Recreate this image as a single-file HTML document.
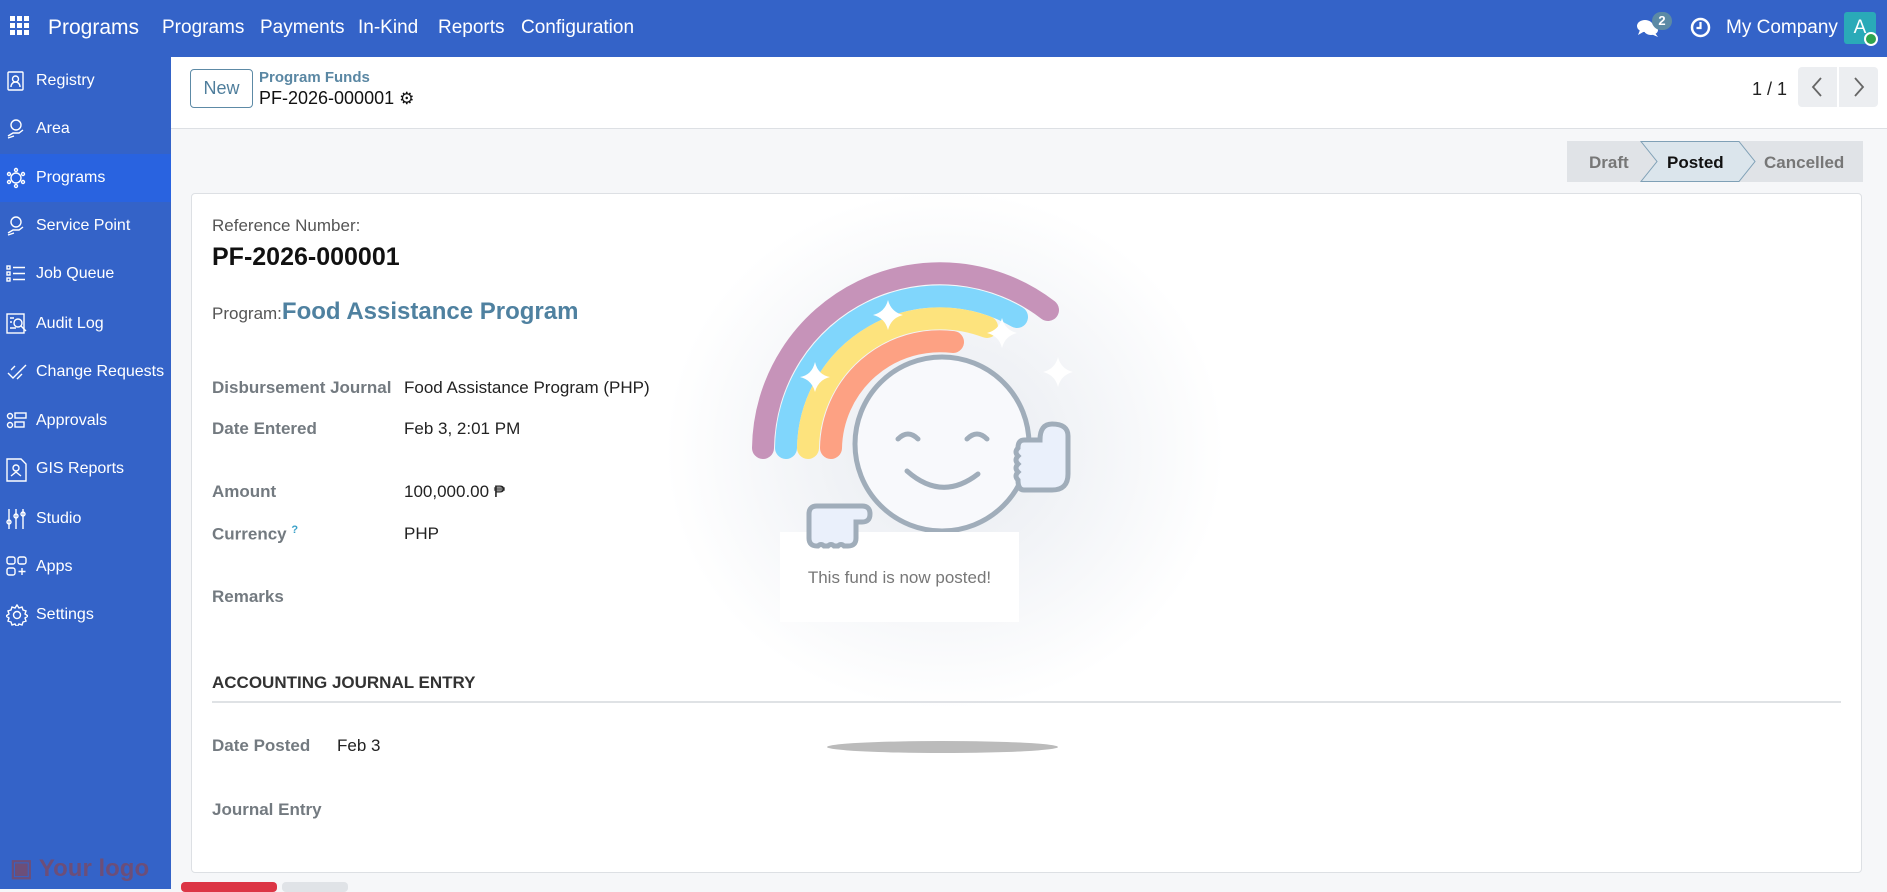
<!DOCTYPE html>
<html><head><meta charset="utf-8"><style>
*{box-sizing:border-box;margin:0;padding:0}
body{width:1887px;height:889px;overflow:hidden;font-family:"Liberation Sans",sans-serif;background:#f6f7f9;position:relative}
.top{position:absolute;left:0;top:0;width:1887px;height:57px;background:#3463c8;color:#fff}
.top span{position:absolute;top:17px;font-size:19px}
.side{position:absolute;left:0;top:57px;width:171px;height:832px;background:#3463c8;color:#fff}
.si{position:absolute;left:0;width:171px;height:48px;font-size:16px}
.si .t{position:absolute;left:36px;top:15px}
.si svg{position:absolute;left:6px;top:13px}
.cp{position:absolute;left:171px;top:57px;width:1716px;height:72px;background:#fff;border-bottom:1px solid #dde0e4}
.abs{position:absolute}
.lbl{position:absolute;left:212px;font-size:17px;font-weight:bold;color:#737a80}
.val{position:absolute;left:404px;font-size:17px;color:#222}
</style></head><body>
<div class="top">
 <svg class="abs" style="left:10px;top:16px" width="20" height="20" viewBox="0 0 20 20" fill="#fff"><rect x="0" y="0" width="5" height="5"/><rect x="7" y="0" width="5" height="5"/><rect x="14" y="0" width="5" height="5"/><rect x="0" y="7" width="5" height="5"/><rect x="7" y="7" width="5" height="5"/><rect x="14" y="7" width="5" height="5"/><rect x="0" y="14" width="5" height="5"/><rect x="7" y="14" width="5" height="5"/><rect x="14" y="14" width="5" height="5"/></svg>
 <span style="left:48px;font-size:21px;top:16px">Programs</span>
 <span style="left:162px">Programs</span><span style="left:260px">Payments</span><span style="left:358px">In-Kind</span><span style="left:438px">Reports</span><span style="left:521px">Configuration</span>
 <svg class="abs" style="left:1636px;top:18px" width="24" height="20" viewBox="0 0 24 20" fill="#fff"><ellipse cx="9" cy="8" rx="8" ry="6"/><path d="M4 12 L2 17 L9 13Z"/><ellipse cx="15" cy="12" rx="7" ry="5"/><path d="M19 15 L22 19 L15 16Z"/></svg>
 <div class="abs" style="left:1652px;top:12px;width:20px;height:18px;border-radius:9px;background:#5c8aa5;font-size:13px;font-weight:bold;text-align:center;line-height:18px">2</div>
 <svg class="abs" style="left:1690px;top:17px" width="21" height="21" viewBox="0 0 21 21"><circle cx="10.5" cy="10.5" r="8.5" fill="none" stroke="#fff" stroke-width="2.5"/><path d="M10.5 5v6h-4" fill="none" stroke="#fff" stroke-width="2.2"/></svg>
 <span style="left:1726px">My Company</span>
 <div class="abs" style="left:1844px;top:12px;width:32px;height:32px;background:#2aaab8;border-radius:3px;font-size:19px;text-align:center;line-height:32px">A</div>
 <div class="abs" style="left:1864px;top:32px;width:14px;height:14px;border-radius:7px;background:#2ea44f;border:2px solid #fff"></div>
</div>
<div class="side">
 <div class="si" style="top:0"><svg width="20" height="22" viewBox="0 0 20 22" fill="none" stroke="#fff" stroke-width="1.4"><rect x="2" y="2" width="15" height="18" rx="1"/><circle cx="9.5" cy="9" r="3"/><path d="M5 17c0-3 2-5 4.5-5s4.5 2 4.5 5"/></svg><span class="t">Registry</span></div>
 <div class="si" style="top:48px"><svg width="20" height="22" viewBox="0 0 20 22" fill="none" stroke="#fff" stroke-width="1.4"><circle cx="10" cy="7" r="5"/><path d="M2 18l5-3h6l4-3M2 20l6-2"/></svg><span class="t">Area</span></div>
 <div class="si" style="top:97px;background:#2963e0"><svg width="20" height="22" viewBox="0 0 20 22" fill="none" stroke="#fff" stroke-width="1.4"><circle cx="10" cy="11" r="5"/><circle cx="10" cy="3" r="1.5"/><circle cx="10" cy="19" r="1.5"/><circle cx="3" cy="7" r="1.5"/><circle cx="17" cy="7" r="1.5"/><circle cx="3" cy="15" r="1.5"/><circle cx="17" cy="15" r="1.5"/></svg><span class="t">Programs</span></div>
 <div class="si" style="top:145px"><svg width="20" height="22" viewBox="0 0 20 22" fill="none" stroke="#fff" stroke-width="1.4"><circle cx="10" cy="7" r="5"/><path d="M2 18l5-3h6l4-3M2 20l6-2"/></svg><span class="t">Service Point</span></div>
 <div class="si" style="top:193px"><svg width="20" height="22" viewBox="0 0 20 22" fill="none" stroke="#fff" stroke-width="1.4"><rect x="1" y="3" width="3" height="3"/><rect x="1" y="9" width="3" height="3"/><rect x="1" y="15" width="3" height="3"/><path d="M7 4.5h12M7 10.5h12M7 16.5h12"/></svg><span class="t">Job Queue</span></div>
 <div class="si" style="top:243px"><svg width="22" height="22" viewBox="0 0 22 22" fill="none" stroke="#fff" stroke-width="1.4"><rect x="1" y="1" width="17" height="19"/><circle cx="12" cy="10" r="4"/><path d="M15 13l5 5M4 5h4M4 9h2M4 15h6"/></svg><span class="t">Audit Log</span></div>
 <div class="si" style="top:291px"><svg width="22" height="22" viewBox="0 0 22 22" fill="none" stroke="#fff" stroke-width="1.4"><path d="M2 12l5 5L20 4M5 9l4-4M11 18l5-5"/></svg><span class="t">Change Requests</span></div>
 <div class="si" style="top:340px"><svg width="22" height="22" viewBox="0 0 22 22" fill="none" stroke="#fff" stroke-width="1.4"><circle cx="4" cy="6" r="2.5"/><circle cx="4" cy="15" r="2.5"/><rect x="9" y="3" width="11" height="5"/><rect x="9" y="12" width="9" height="5"/></svg><span class="t">Approvals</span></div>
 <div class="si" style="top:388px"><svg width="22" height="24" viewBox="0 0 22 24" fill="none" stroke="#fff" stroke-width="1.4"><path d="M1 1h14l5 5v17H1z"/><circle cx="10" cy="10" r="3"/><path d="M5 18l5-4 5 4"/></svg><span class="t">GIS Reports</span></div>
 <div class="si" style="top:438px"><svg width="22" height="22" viewBox="0 0 22 22" fill="none" stroke="#fff" stroke-width="1.4"><path d="M3 1v20M10 1v20M17 1v20"/><circle cx="3" cy="14" r="2"/><circle cx="10" cy="8" r="2"/><circle cx="17" cy="6" r="2"/></svg><span class="t">Studio</span></div>
 <div class="si" style="top:486px"><svg width="22" height="22" viewBox="0 0 22 22" fill="none" stroke="#fff" stroke-width="1.4"><rect x="1" y="1" width="8" height="7" rx="2"/><rect x="12" y="1" width="8" height="7" rx="2"/><rect x="1" y="12" width="8" height="7" rx="2"/><path d="M16 12v7M12.5 15.5h7"/></svg><span class="t">Apps</span></div>
 <div class="si" style="top:534px"><svg width="22" height="22" viewBox="0 0 22 22" fill="none" stroke="#fff" stroke-width="1.4"><circle cx="11" cy="11" r="3.5"/><path d="M11 1l2 3 3-1 1 3 3 1-1 3 3 2-3 2 1 3-3 1-1 3-3-1-2 3-2-3-3 1-1-3-3-1 1-3-3-2 3-2-1-3 3-1 1-3 3 1z"/></svg><span class="t">Settings</span></div>
 <div class="abs" style="left:10px;top:797px;font-size:24px;font-weight:bold;color:#7a4a66;opacity:.8">&#9635; Your logo</div>
</div>
<div class="cp">
 <div class="abs" style="left:19px;top:12px;width:63px;height:39px;border:1px solid #5d8aa6;border-radius:4px;color:#4f7e9c;font-size:18px;text-align:center;line-height:37px">New</div>
 <div class="abs" style="left:88px;top:12px;font-size:15px;font-weight:bold;color:#5a87a3">Program Funds</div>
 <div class="abs" style="left:88px;top:31px;font-size:18px;color:#111">PF-2026-000001 <span style="font-size:17px">&#9881;</span></div>
 <div class="abs" style="left:1581px;top:22px;font-size:18px;color:#222">1 / 1</div>
 <div class="abs" style="left:1627px;top:10px;width:39px;height:40px;background:#eceef1;border-radius:4px 0 0 4px"><svg width="39" height="40"><path d="M23 11 L15 20 L23 29" fill="none" stroke="#666" stroke-width="1.8"/></svg></div>
 <div class="abs" style="left:1668px;top:10px;width:39px;height:40px;background:#eceef1;border-radius:0 4px 4px 0"><svg width="39" height="40"><path d="M16 11 L24 20 L16 29" fill="none" stroke="#666" stroke-width="1.8"/></svg></div>
</div>
<svg class="abs" style="left:1567px;top:141px" width="296" height="41" viewBox="0 0 296 41"><rect width="296" height="41" fill="#e0e3e7"/><path d="M74 0.5H172L188 20.5 172 40.5H74L90 20.5Z" fill="#dbe5ec" stroke="#7fa0b6"/>
<text x="22" y="27" font-family="Liberation Sans" font-size="17" font-weight="bold" fill="#777">Draft</text>
<text x="100" y="27" font-family="Liberation Sans" font-size="17" font-weight="bold" fill="#111">Posted</text>
<text x="197" y="27" font-family="Liberation Sans" font-size="17" font-weight="bold" fill="#777">Cancelled</text></svg>
<div class="abs" style="left:191px;top:193px;width:1671px;height:680px;background:#fff;border:1px solid #dde0e4;border-radius:4px"></div>
<div class="abs" style="left:212px;top:216px;font-size:17px;color:#555">Reference Number:</div>
<div class="abs" style="left:212px;top:243px;font-size:25px;font-weight:bold;color:#111">PF-2026-000001</div>
<div class="abs" style="left:212px;top:298px;font-size:17px;color:#555">Program:<span style="font-size:24px;font-weight:bold;color:#4f81a0">Food Assistance Program</span></div>
<div class="lbl" style="top:378px">Disbursement Journal</div><div class="val" style="top:378px">Food Assistance Program (PHP)</div>
<div class="lbl" style="top:419px">Date Entered</div><div class="val" style="top:419px">Feb 3, 2:01 PM</div>
<div class="lbl" style="top:482px">Amount</div><div class="val" style="top:482px">100,000.00 &#8369;</div>
<div class="lbl" style="top:524px">Currency <sup style="color:#3aa0c8;font-size:11px">?</sup></div><div class="val" style="top:524px">PHP</div>
<div class="lbl" style="top:587px">Remarks</div>
<div class="abs" style="left:212px;top:673px;font-size:17px;font-weight:bold;color:#333">ACCOUNTING JOURNAL ENTRY</div>
<div class="abs" style="left:212px;top:701px;width:1629px;height:2px;background:#dfe2e5"></div>
<div class="lbl" style="top:736px">Date Posted</div><div class="val" style="left:337px;top:736px">Feb 3</div>
<div class="lbl" style="top:800px">Journal Entry</div>
<div class="abs" style="left:827px;top:741px;width:231px;height:12px;border-radius:50%;background:#bbb"></div>
<div class="abs" style="left:181px;top:882px;width:96px;height:10px;background:#dc3545;border-radius:4px"></div>
<div class="abs" style="left:282px;top:882px;width:66px;height:10px;background:#e0e3e7;border-radius:4px"></div>
<div class="abs" style="left:665px;top:190px;width:560px;height:520px;border-radius:50%;background:radial-gradient(closest-side,rgba(225,229,236,.8),rgba(235,238,243,.5) 60%,rgba(246,247,249,0))"></div>
<svg class="abs" style="left:0;top:0" width="1887" height="889" viewBox="0 0 1887 889">
 <g fill="none" stroke-linecap="round" stroke-width="22">
  <path d="M763 448 A177 177 0 0 1 1048 310" stroke="#c693b9"/>
  <path d="M786 448 A154 154 0 0 1 1017 317" stroke="#80d6fc"/>
  <path d="M808 448 A132 132 0 0 1 987 327" stroke="#fde37d"/>
  <path d="M831 448 A109 109 0 0 1 953 342" stroke="#fda183"/>
 </g>
 <g fill="#fff"><path d="M815 362 Q818 375 830 377 Q818 380 815 392 Q812 380 800 377 Q812 375 815 362Z"/><path d="M888 300 Q891 312 903 315 Q891 318 888 330 Q885 318 873 315 Q885 312 888 300Z"/><path d="M1002 318 Q1005 330 1017 333 Q1005 336 1002 348 Q999 336 987 333 Q999 330 1002 318Z"/><path d="M1058 357 Q1061 369 1073 372 Q1061 375 1058 387 Q1055 375 1043 372 Q1055 369 1058 357Z"/></g>
 <circle cx="942" cy="444" r="87" fill="#f8f9fc" stroke="#a0adba" stroke-width="5"/>
 <g fill="none" stroke="#a0adba" stroke-width="5" stroke-linecap="round"><path d="M898 439 Q908 429 918 439"/><path d="M967 439 Q977 429 987 439"/><path d="M907 471 Q942 502 978 474"/></g>
 <path d="M1024 440 h16 q0-16 12-16 q16 0 16 12 v38 q0 16-16 16 h-28 q-6 0-6-10 q-4-4 0-8 q-4-4 0-8 q-4-4 0-8 q-4-4 0-8 q0-8 6-8z" fill="#eaf0fb" stroke="#a0adba" stroke-width="5"/>
</svg>
<div class="abs" style="left:780px;top:532px;width:239px;height:90px;background:#fff;text-align:center;font-size:17px;color:#777;padding-top:36px">This fund is now posted!</div>
<svg class="abs" style="left:800px;top:498px" width="80" height="60" viewBox="800 498 80 60">
 <path d="M817 506 h45 q8 0 8 8 q0 8-8 8 h-6 v16 q0 8-8 8 h-4 q-3-3-6 0 h-4 q-3-3-6 0 h-4 q-3-3-6 0 h-1 q-8 0-8-8 v-24 q0-8 8-8z" fill="#eaf0fb" stroke="#a0adba" stroke-width="5"/>
</svg>
</body></html>
